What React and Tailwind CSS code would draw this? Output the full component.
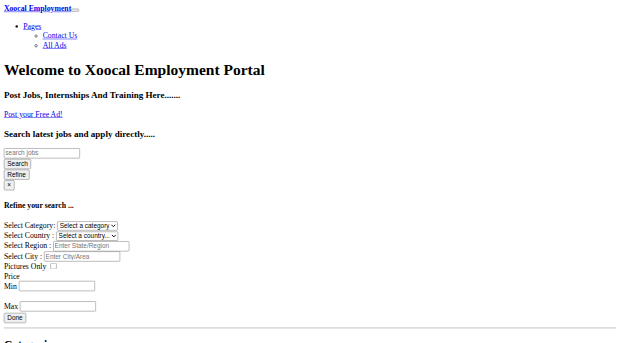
import React from "react";

const link = "text-[#0000ee] underline";
const ctl = "font-['Liberation_Sans',Arial,sans-serif] text-[13.333px] leading-[normal]";
const input = `${ctl} w-[157px] h-[21px] border border-[#767676] rounded-[2px] px-[2px] py-[1px] bg-white placeholder:text-[#757575]`;
const btn = `${ctl} h-[21px] border border-[#767676] rounded-[3px] px-[6px] py-[1px] bg-[#efefef] text-black`;
const sel = `${ctl} h-[19px] border border-[#767676] rounded-[2px] bg-white text-black`;
const row = "flex items-center gap-[4px] h-[21px]";

export default function App() {
  return (
    <div className="w-[620px] h-[343px] overflow-hidden bg-white">
      <div className="w-[1280px] origin-top-left scale-[0.484375] p-2 font-['Liberation_Serif','Times_New_Roman',serif] text-[16px] leading-[20px] text-black bg-white">
        <div>
          <a href="#" className={`${link} font-bold`}>Xoocal Employment</a>
          <button className="inline-block w-[16px] h-[6px] border border-[#767676] rounded-[2px] bg-[#efefef] align-baseline"></button>
        </div>
        <ul className="list-disc pl-10 my-4">
          <li>
            <a href="#" className={link}>Pages</a>
            <ul className="[list-style-type:circle] pl-10">
              <li><a href="#" className={link}>Contact Us</a></li>
              <li><a href="#" className={link}>All Ads</a></li>
            </ul>
          </li>
        </ul>
        <h1 className="text-[32px] leading-[1.2] font-bold my-[21.44px]">Welcome to Xoocal Employment Portal</h1>
        <h3 className="text-[18.72px] leading-[1.2] font-bold my-[18.72px]">Post Jobs, Internships And Training Here.......</h3>
        <p className="my-4"><a href="#" className={link}>Post your Free Ad!</a></p>
        <h3 className="text-[18.72px] leading-[1.2] font-bold my-[18.72px]">Search latest jobs and apply directly.....</h3>
        <div className="flex flex-col items-start gap-[1px]">
          <input type="text" placeholder="search jobs" className={input} />
          <button className={btn}>Search</button>
          <button className={btn}>Refine</button>
          <button className={btn}>×</button>
        </div>
        <h4 className="text-[16px] font-bold my-[21.28px]">Refine your search ...</h4>
        <div>
          <div className={row}>
            <span>Select Category:</span>
            <select className={sel} defaultValue="">
              <option value="">Select a category</option>
            </select>
          </div>
          <div className={row}>
            <span>Select Country :</span>
            <select className={sel} defaultValue="">
              <option value="">Select a country...</option>
            </select>
          </div>
          <div className={row}>
            <span>Select Region :</span>
            <input type="text" placeholder="Enter State/Region" className={input} />
          </div>
          <div className={row}>
            <span>Select City :</span>
            <input type="text" placeholder="Enter City/Area" className={input} />
          </div>
          <div className="flex items-center gap-[4px] h-[20px]">
            <span>Pictures Only</span>
            <input type="checkbox" className="ml-[4px] w-[13px] h-[13px]" />
          </div>
          <div className="h-[20px]">Price</div>
          <div className="flex items-center gap-[4px] h-[22px]">
            <span>Min</span>
            <input type="text" className={input} />
          </div>
          <div className="h-[20px]"></div>
          <div className="flex items-center gap-[4px] h-[22px]">
            <span>Max</span>
            <input type="text" className={input} />
          </div>
          <div className="flex items-center h-[22px] mt-[2px]">
            <button className={btn}>Done</button>
          </div>
        </div>
        <hr className="my-2 h-0 border-t-2 border-b border-x-0 border-t-[#c4c4c4] border-b-[#e4e4e4]" />
        <h2 className="text-[24px] leading-[1.2] font-bold my-[19.92px]">Categories</h2>
      </div>
    </div>
  );
}
